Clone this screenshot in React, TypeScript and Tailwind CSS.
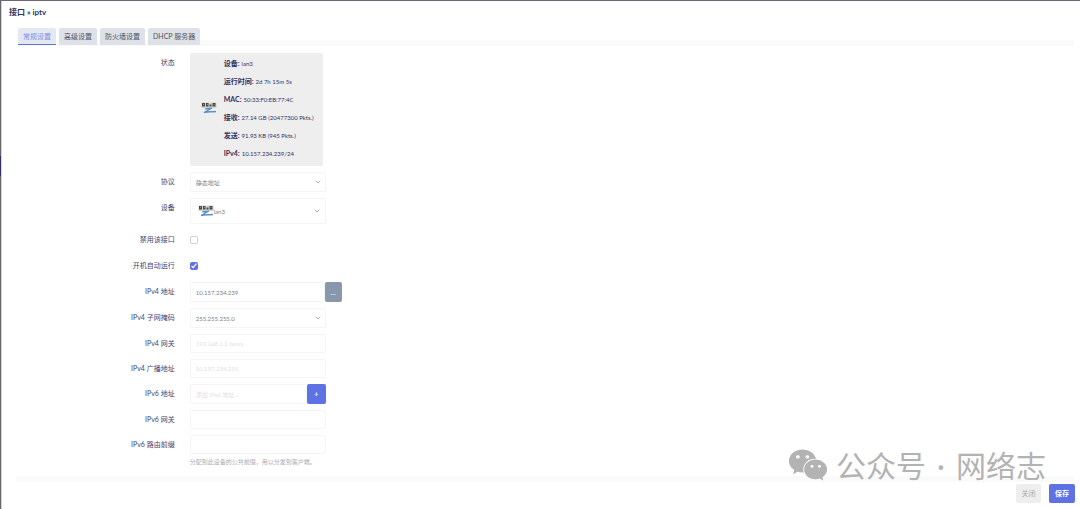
import type { InputHTMLAttributes, ReactNode } from 'react';
import { ChevronDown } from 'lucide-react';
import { FaWeixin } from 'react-icons/fa';

const tabs = ['常规设置', '高级设置', '防火墙设置', 'DHCP 服务器'];

const status = [
  { label: '设备', value: 'lan3' },
  { label: '运行时间', value: '2d 7h 15m 5s' },
  { label: 'MAC', value: '50:33:F0:EB:77:4C' },
  { label: '接收', value: '27.14 GB (20477300 Pkts.)' },
  { label: '发送', value: '91.93 KB (945 Pkts.)' },
  { label: 'IPv4', value: '10.157.234.239/24' },
];

function Row({ id, label, children }: { id?: string; label: string; children: ReactNode }) {
  return (
    <div className="flex items-start gap-[15px]">
      <label htmlFor={id} className="w-[15%] shrink-0 text-right leading-[18px] text-[#46436a]">
        {label}
      </label>
      <div className="min-w-0 flex-1">{children}</div>
    </div>
  );
}

function TextInput({ className = 'h-[19px] w-[136px]', ...props }: InputHTMLAttributes<HTMLInputElement>) {
  return (
    <input
      type="text"
      className={`block rounded-xs border border-[#f4f5f7] bg-white px-[5px] text-[6px] text-[#7c7f88] outline-none placeholder:text-[#dfe0e3] ${className}`}
      {...props}
    />
  );
}

function Select({ id, value }: { id: string; value: string }) {
  return (
    <div className="relative w-[136px]">
      <select
        id={id}
        className="block h-5 w-full appearance-none rounded-xs border border-[#f4f5f7] bg-white px-[5px] text-[6px] text-[#7c7f88] outline-none"
      >
        <option>{value}</option>
      </select>
      <ChevronDown className="pointer-events-none absolute top-1.5 right-1 size-2 text-[#8a8d96]" />
    </div>
  );
}

function PortIcon() {
  return (
    <svg width="16" height="12" viewBox="0 0 16 12" className="shrink-0">
      <rect x="0.5" y="0.5" width="15" height="5.5" fill="#d4d3cc" />
      <path d="M1 1h3v3.5H1zM5 1h2.5v3.5H5zM8.5 2.5h2v2h-2zM11.5 1h3v3.5h-3z" fill="#4b4b4b" />
      <path d="M2 2h1v1H2zM6 2h1v1H6zM12.5 2h1v1h-1z" fill="#8c8c80" />
      <path d="M4 7c3-1 5 0 7-1L3 10.5c4-1 6-.5 12-1" fill="none" stroke="#5a8fc8" strokeWidth="1.3" />
    </svg>
  );
}

export default function App() {
  return (
    <div className="relative flex min-h-screen border-t border-[#6b667c] bg-white font-['Lato','Noto_Sans_CJK_SC',sans-serif] text-[7px]">
      <div className="flex w-0.5 flex-col border-r border-[#d5d5d8] bg-[#66666c]">
        <div className="h-[155px]" />
        <div className="h-5 bg-[#35315f]" />
      </div>

      <div className="flex min-w-0 flex-1 flex-col">
        <h1 className="px-[7px] pt-[3px] text-[8px] leading-4 font-bold text-[#32325d]">接口 » iptv</h1>

        <main className="pt-2 pr-1.5 pl-3.5">
          <div className="relative z-10 flex gap-[3px] pl-0.5" role="tablist">
            {tabs.map((tab, i) => (
              <button
                key={tab}
                type="button"
                role="tab"
                aria-selected={i === 0}
                className={`h-[17px] rounded-t-xs border-b px-[5px] leading-4 ${
                  i === 0
                    ? 'border-[#5e72e4] bg-[#e4e8f0] text-[#7e8ee9]'
                    : 'border-[#dee2e8] bg-[#dee2e8] text-[#4f5260]'
                }`}
              >
                {tab}
              </button>
            ))}
          </div>

          <form
            id="interface"
            className="-mt-[5px] flex flex-col gap-1.5 border-y-[6px] border-[#fafafa] pt-[7px] pb-2"
            onSubmit={(e) => e.preventDefault()}
          >
            <Row label="状态">
              <div className="flex w-[133px] items-center rounded-xs bg-[#eeeeef] pt-px pr-1 pb-1 pl-[11px] text-[#32325d]">
                <PortIcon />
                <ul className="pl-[7px] whitespace-nowrap">
                  {status.map((item) => (
                    <li key={item.label} className="flex h-[18px] items-center gap-0.5">
                      <strong>{item.label}:</strong>
                      <span className="text-[6px]">{item.value}</span>
                    </li>
                  ))}
                </ul>
              </div>
            </Row>
            <Row id="proto" label="协议">
              <Select id="proto" value="静态地址" />
            </Row>
            <Row id="device" label="设备">
              <button
                id="device"
                type="button"
                className="flex h-[26px] w-[136px] items-center rounded-xs border border-[#f4f5f7] bg-white pr-1 pl-[7px] text-[#7c7f88]"
              >
                <PortIcon />
                <span className="text-[6px]">lan3</span>
                <ChevronDown className="ml-auto size-2" />
              </button>
            </Row>
            <Row id="disabled" label="禁用该接口">
              <div className="flex h-5 items-center">
                <input
                  id="disabled"
                  type="checkbox"
                  className="size-2 appearance-none rounded-xs border border-[#cfd1dc] bg-white"
                />
              </div>
            </Row>
            <Row id="auto" label="开机自动运行">
              <div className="flex h-5 items-center">
                <input id="auto" type="checkbox" defaultChecked className="size-2 accent-[#5e72e4]" />
              </div>
            </Row>
            <Row id="ipaddr" label="IPv4 地址">
              <div className="flex">
                <TextInput id="ipaddr" defaultValue="10.157.234.239" className="h-5 w-[135px]" />
                <button type="button" className="h-5 w-[17px] rounded-xs bg-[#8898aa] text-white">
                  …
                </button>
              </div>
            </Row>
            <Row id="netmask" label="IPv4 子网掩码">
              <Select id="netmask" value="255.255.255.0" />
            </Row>
            <Row id="gateway" label="IPv4 网关">
              <TextInput id="gateway" placeholder="192.168.1.1 (wan)" />
            </Row>
            <Row id="broadcast" label="IPv4 广播地址">
              <TextInput id="broadcast" placeholder="10.157.234.255" />
            </Row>
            <Row id="ip6addr" label="IPv6 地址">
              <div className="flex">
                <TextInput id="ip6addr" placeholder="添加 IPv6 地址…" className="h-5 w-[117px]" />
                <button type="button" className="h-5 w-[19px] rounded-xs bg-[#5e72e4] font-bold text-white">
                  +
                </button>
              </div>
            </Row>
            <Row id="ip6gw" label="IPv6 网关">
              <TextInput id="ip6gw" />
            </Row>
            <Row id="ip6prefix" label="IPv6 路由前缀">
              <TextInput id="ip6prefix" />
              <p className="pt-0.5 text-[6px] leading-3 text-[#a9abb2]">
                分配到此设备的公共前缀，用以分发到客户端。
              </p>
            </Row>
          </form>
        </main>

        <footer className="flex justify-end gap-2 pt-0.5 pr-[5px]">
          <button type="button" className="h-[19px] w-[25px] rounded-xs bg-[#eeeeef] text-[#a5a8ae]">
            关闭
          </button>
          <button
            type="submit"
            form="interface"
            className="h-[19px] w-[26px] rounded-xs bg-[#5e72e4] font-bold text-white"
          >
            保存
          </button>
        </footer>
      </div>

      <div className="pointer-events-none absolute right-[34px] bottom-6 z-20 flex items-center gap-2 text-[#b3b3b3]">
        <FaWeixin className="h-9 w-10" />
        <p className="flex text-[30px] leading-10 whitespace-nowrap">
          <span>公众号</span>
          <span className="w-[30px] text-center">·</span>
          <span>网络志</span>
        </p>
      </div>
    </div>
  );
}
